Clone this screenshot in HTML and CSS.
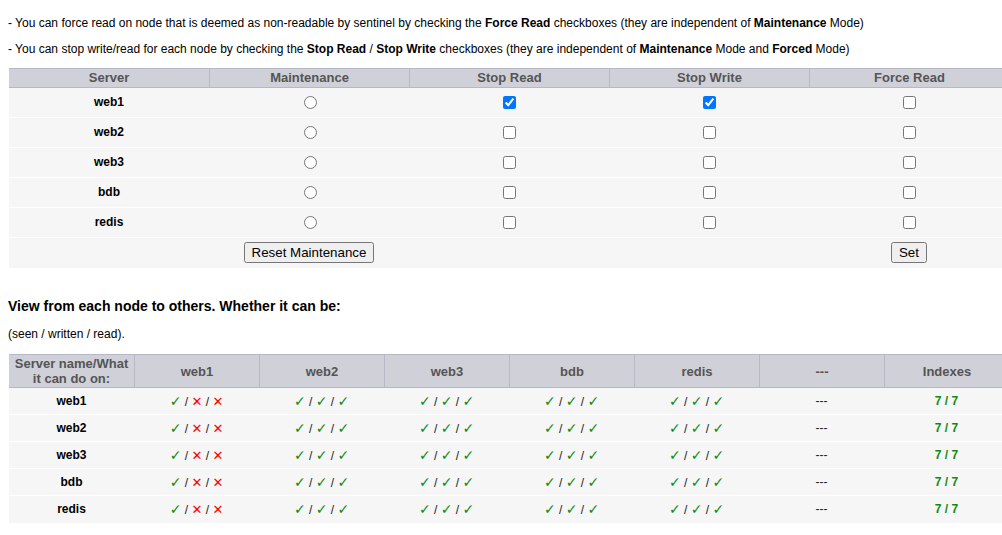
FILE: index.html
```html
<!DOCTYPE html>
<html>
<head>
<meta charset="utf-8">
<link rel="stylesheet" href="styles.css">
</head>
<body>
<div class="page">
  <p class="note">- You can force read on node that is deemed as non-readable by sentinel by checking the <b>Force Read</b> checkboxes (they are independent of <b>Maintenance</b> Mode)</p>
  <p class="note">- You can stop write/read for each node by checking the <b>Stop Read</b> / <b>Stop Write</b> checkboxes (they are independent of <b>Maintenance</b> Mode and <b>Forced</b> Mode)</p>

  <table class="grid ctl">
    <thead>
      <tr><th>Server</th><th>Maintenance</th><th>Stop Read</th><th>Stop Write</th><th>Force Read</th></tr>
    </thead>
    <tbody>
      <tr><td class="name">web1</td><td><input type="radio" name="m"></td><td><input type="checkbox" checked></td><td><input type="checkbox" checked></td><td><input type="checkbox"></td></tr>
      <tr><td class="name">web2</td><td><input type="radio" name="m"></td><td><input type="checkbox"></td><td><input type="checkbox"></td><td><input type="checkbox"></td></tr>
      <tr><td class="name">web3</td><td><input type="radio" name="m"></td><td><input type="checkbox"></td><td><input type="checkbox"></td><td><input type="checkbox"></td></tr>
      <tr><td class="name">bdb</td><td><input type="radio" name="m"></td><td><input type="checkbox"></td><td><input type="checkbox"></td><td><input type="checkbox"></td></tr>
      <tr><td class="name">redis</td><td><input type="radio" name="m"></td><td><input type="checkbox"></td><td><input type="checkbox"></td><td><input type="checkbox"></td></tr>
      <tr class="last"><td></td><td><button>Reset Maintenance</button></td><td></td><td></td><td><button>Set</button></td></tr>
    </tbody>
  </table>

  <h3 class="title">View from each node to others. Whether it can be:</h3>
  <p class="note">(seen / written / read).</p>

  <table class="grid view">
    <thead>
      <tr><th>Server name/What it can do on:</th><th>web1</th><th>web2</th><th>web3</th><th>bdb</th><th>redis</th><th class="dash">---</th><th>Indexes</th></tr>
    </thead>
    <tbody>
      <tr><td class="name">web1</td><td><span class="ok">✓</span> / <span class="ko">✕</span> / <span class="ko">✕</span></td><td><span class="ok">✓</span> / <span class="ok">✓</span> / <span class="ok">✓</span></td><td><span class="ok">✓</span> / <span class="ok">✓</span> / <span class="ok">✓</span></td><td><span class="ok">✓</span> / <span class="ok">✓</span> / <span class="ok">✓</span></td><td><span class="ok">✓</span> / <span class="ok">✓</span> / <span class="ok">✓</span></td><td>---</td><td class="idx">7 / 7</td></tr>
      <tr><td class="name">web2</td><td><span class="ok">✓</span> / <span class="ko">✕</span> / <span class="ko">✕</span></td><td><span class="ok">✓</span> / <span class="ok">✓</span> / <span class="ok">✓</span></td><td><span class="ok">✓</span> / <span class="ok">✓</span> / <span class="ok">✓</span></td><td><span class="ok">✓</span> / <span class="ok">✓</span> / <span class="ok">✓</span></td><td><span class="ok">✓</span> / <span class="ok">✓</span> / <span class="ok">✓</span></td><td>---</td><td class="idx">7 / 7</td></tr>
      <tr><td class="name">web3</td><td><span class="ok">✓</span> / <span class="ko">✕</span> / <span class="ko">✕</span></td><td><span class="ok">✓</span> / <span class="ok">✓</span> / <span class="ok">✓</span></td><td><span class="ok">✓</span> / <span class="ok">✓</span> / <span class="ok">✓</span></td><td><span class="ok">✓</span> / <span class="ok">✓</span> / <span class="ok">✓</span></td><td><span class="ok">✓</span> / <span class="ok">✓</span> / <span class="ok">✓</span></td><td>---</td><td class="idx">7 / 7</td></tr>
      <tr><td class="name">bdb</td><td><span class="ok">✓</span> / <span class="ko">✕</span> / <span class="ko">✕</span></td><td><span class="ok">✓</span> / <span class="ok">✓</span> / <span class="ok">✓</span></td><td><span class="ok">✓</span> / <span class="ok">✓</span> / <span class="ok">✓</span></td><td><span class="ok">✓</span> / <span class="ok">✓</span> / <span class="ok">✓</span></td><td><span class="ok">✓</span> / <span class="ok">✓</span> / <span class="ok">✓</span></td><td>---</td><td class="idx">7 / 7</td></tr>
      <tr class="last"><td class="name">redis</td><td><span class="ok">✓</span> / <span class="ko">✕</span> / <span class="ko">✕</span></td><td><span class="ok">✓</span> / <span class="ok">✓</span> / <span class="ok">✓</span></td><td><span class="ok">✓</span> / <span class="ok">✓</span> / <span class="ok">✓</span></td><td><span class="ok">✓</span> / <span class="ok">✓</span> / <span class="ok">✓</span></td><td><span class="ok">✓</span> / <span class="ok">✓</span> / <span class="ok">✓</span></td><td>---</td><td class="idx">7 / 7</td></tr>
    </tbody>
  </table>
</div>
</body>
</html>
```

FILE: styles.css
```css
html {
  overflow: hidden;
}
body {
  margin: 0;
  background: #fff;
  color: #000;
  font-family: "Liberation Sans", Arial, sans-serif;
}
.page {
  padding: 4px 8px;
}
.note {
  font-size: 12px;
  line-height: 14px;
  margin: 12px 0;
}
.title {
  font-size: 14px;
  line-height: 16px;
  font-weight: bold;
  margin: 30px 0 13px;
}
.title + .note {
  margin: 13px 0;
}
.grid {
  border-collapse: separate;
  border-spacing: 0;
  width: 1000px;
  margin-left: 1px;
  table-layout: fixed;
}
.grid th {
  background: #cfd0d8;
  color: #555;
  font-size: 13px;
  font-weight: bold;
  padding: 0 2px;
  border-top: 1px solid #b7b8c6;
  border-bottom: 1px solid #b7b8c6;
  border-left: 1px solid #b7b8c6;
  text-align: center;
}
.grid th:first-child {
  border-left: none;
}
.grid td {
  background: #f6f6f6;
  text-align: center;
  padding: 0;
  border-bottom: 1px solid #fff;
  font-size: 12px;
}
.grid tr.last td {
  border-bottom: none;
}
.grid td.name {
  font-weight: bold;
}
.ctl thead tr {
  height: 20px;
}
.ctl th {
  line-height: 16px;
}
.ctl tbody tr {
  height: 30px;
}
.ctl td {
  padding-bottom: 2px;
}
.ctl input {
  margin: 0 3px 0 4px;
  vertical-align: middle;
}
.ctl input[type="radio"] {
  margin: 0 3px 0 5px;
}
.view thead tr {
  height: 34px;
}
.view th {
  line-height: 15px;
}
.view tbody tr {
  height: 27px;
}
.view td {
  color: #222;
  padding-bottom: 1px;
}
.view .ok,
.view .ko {
  font-family: "DejaVu Sans", sans-serif;
}
.view .ok {
  color: #118a11;
  font-size: 14px;
}
.view .ko {
  color: #f00;
  font-size: 13px;
  font-weight: bold;
}
.view td.idx {
  color: #118a11;
  font-weight: bold;
}
.view td.name {
  color: #000;
}
```
